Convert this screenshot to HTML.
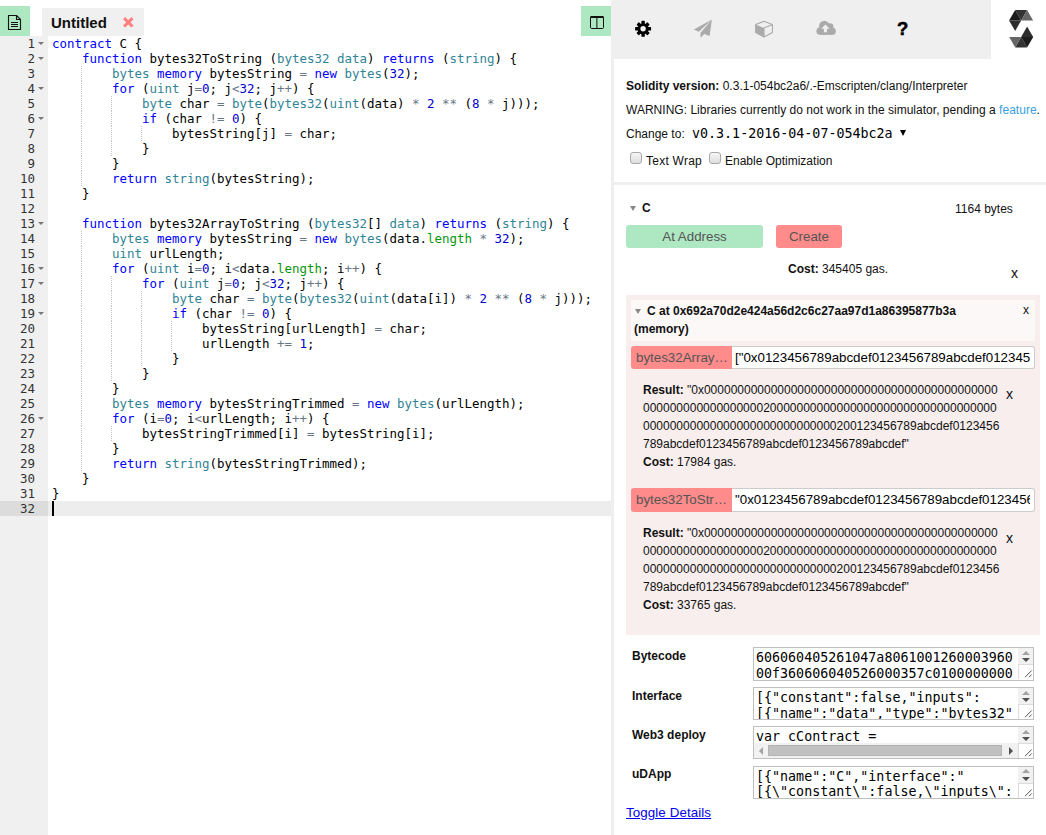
<!DOCTYPE html>
<html>
<head>
<meta charset="utf-8">
<title>Solidity realtime compiler and runtime</title>
<style>
*{box-sizing:border-box}
html,body{margin:0;padding:0;width:1046px;height:835px;overflow:hidden;background:#fff}
body{font-family:"Liberation Sans",Arial,sans-serif;font-size:12px;color:#111;position:relative}
.abs{position:absolute}
b{font-weight:bold}
/* ---------- left: editor ---------- */
#editor{position:absolute;left:0;top:0;width:612px;height:835px;background:#fff}
#newfile{position:absolute;left:0;top:6px;width:30px;height:30px;background:#aee8c3}
#toggleR{position:absolute;left:581px;top:6px;width:30px;height:30px;background:#aee8c3}
#tab{position:absolute;left:42px;top:8px;width:102px;height:28px;background:#f0f0f0;font-weight:bold;font-size:15px;color:#111;line-height:30px;padding-left:9px}
#tab svg{position:absolute;left:80px;top:7.8px}
#gutter{position:absolute;left:0;top:36px;width:48px;height:799px;background:#f0f0f0}
#code{position:absolute;left:0;top:36px;width:612px;height:799px;font-family:"DejaVu Sans Mono","Liberation Mono",monospace;font-size:12.46px;line-height:15px;color:#000}
.ln{position:relative;height:15px;white-space:pre}
.ln .n{position:absolute;left:0;top:0;width:35px;text-align:right;color:#333}
.ln .f{position:absolute;left:38px;top:6px;width:0;height:0;border-left:3px solid transparent;border-right:3px solid transparent;border-top:3.5px solid #777}
.ln .t{position:absolute;left:52px;top:0}
.ln.act{background:#ededed}
.ln.act .gl{position:absolute;left:0;top:0;width:48px;height:15px;background:#dcdcdc}
.k{color:#0000ff}.v{color:#318495}.o{color:#687687}.d{color:#0000cd}.c{color:#06960e}
.ig{position:absolute;top:0;width:1px;height:15px;background-image:linear-gradient(#c4c4c4 50%,transparent 50%);background-size:1px 2px}
#cursor{position:absolute;left:52px;top:501px;width:2px;height:15px;background:#000}
/* ---------- right panel ---------- */
#right{position:absolute;left:611px;top:0;width:435px;height:835px;background:#fff}
#dragbar{position:absolute;left:0;top:0;width:3px;height:835px;background:#efefef}
#menu{position:absolute;left:0;top:0;width:380px;height:59px;background:#efefef}
.sep{position:absolute;left:3px;width:432px;height:3px;background:#efefef}
.t12{position:absolute;white-space:nowrap;font-size:12px;line-height:18px;color:#111}
a.lnk{color:#3a9fe0;text-decoration:none}
.cb{position:absolute;width:12px;height:12px;border:1px solid #a9a9a9;border-radius:3px;background:linear-gradient(#f6f6f6,#dedede)}
.btn{position:absolute;height:23px;border-radius:3px;font-family:"Liberation Sans",Arial,sans-serif;font-size:13.33px;line-height:23px;text-align:center;white-space:nowrap;overflow:hidden}
.green{background:#aee8c3;color:#555}
.red{background:#ff8b8b;color:#555}
.fbtn{border-radius:3px 0 0 3px;color:#555;text-align:left;padding-left:5px}
.inp{position:absolute;height:23px;background:#fff;border:1px solid #ccc;border-left:0;border-radius:0 3px 3px 0;font-family:"Liberation Sans",Arial,sans-serif;font-size:13.33px;line-height:21px;padding:0 4px 0 3px;white-space:nowrap;overflow:hidden;color:#000}
.inp span{display:block;overflow:hidden}
#inst{position:absolute;left:15px;top:295px;width:414px;height:340px;background:#f7eeed}
#inst .title{position:absolute;left:5px;top:5px;width:404px;height:41px;background:#fbf8f7;font-weight:bold;line-height:18px;padding:2px 3px;white-space:nowrap}
.res{position:absolute;left:17px;width:358px;line-height:18px;font-size:12px;word-break:break-all;color:#111}
.x{position:absolute;font-size:14px;line-height:14px;color:#111}
.row b{position:absolute;left:21px;font-size:12px}
.ta{position:absolute;left:142px;width:281px;height:33px;border:1px solid #c0c0c0;background:#fff;font-family:"DejaVu Sans Mono","Liberation Mono",monospace;font-size:13.33px;line-height:15.5px;padding:2px 0 0 2px;white-space:pre;overflow:hidden;color:#000}
.ta .sb{position:absolute;right:0;top:0;width:15px;height:16px;background:#f1f1f1}
.ta .sb:before{content:"";position:absolute;left:3.5px;top:2.8px;border-left:4px solid transparent;border-right:4px solid transparent;border-bottom:4.2px solid #a3a3a3}
.ta .sb:after{content:"";position:absolute;left:3.5px;top:10px;border-left:4px solid transparent;border-right:4px solid transparent;border-top:4.2px solid #505050}
.ta .rz{position:absolute;right:0;top:16px;width:15px;height:15px;background:#fff;border-left:1px solid #dcdcdc;border-top:1px solid #dcdcdc}
.ta .rz svg{position:absolute;left:-1px;top:-1px}
.ta .hs{position:absolute;left:0;top:16px;width:264px;height:15px;background:#f1f1f1}
.ta .hs:before{content:"";position:absolute;left:4.8px;top:3.5px;border-top:4px solid transparent;border-bottom:4px solid transparent;border-right:4.2px solid #a3a3a3}
.ta .hs:after{content:"";position:absolute;left:255px;top:3.5px;border-top:4px solid transparent;border-bottom:4px solid transparent;border-left:4.2px solid #505050}
.ta .hs i{position:absolute;left:14px;top:2px;width:234px;height:11px;background:#c1c1c1;border:1px solid #b4b4b4}
</style>
</head>
<body>
<div id="editor">
  <div id="gutter"></div>
  <div id="newfile"><svg width="30" height="30" viewBox="0 0 30 30" style="position:absolute;left:0;top:0"><path d="M8.5 9.5 H16.5 L20.5 13.5 V23.5 H8.5 Z M16.5 9.5 V13.5 H20.5" fill="none" stroke="#111" stroke-width="1.1" stroke-linejoin="round"/><path d="M11 16.5 H18 M11 18.5 H18 M11 20.5 H18" stroke="#111" stroke-width="1" fill="none"/></svg></div>
  <div id="tab">Untitled<svg width="12.6" height="12.6" viewBox="0 0 12 12"><path d="M2 2 L10 10 M10 2 L2 10" stroke="#ff8080" stroke-width="3" fill="none"/></svg></div>
  <div id="toggleR"><svg width="30" height="30" viewBox="0 0 30 30" style="position:absolute;left:0;top:0"><rect x="9.5" y="10.5" width="13" height="12" rx="1.2" fill="none" stroke="#111" stroke-width="1"/><rect x="9.5" y="10" width="13" height="2" fill="#111"/><path d="M15.9 11 V22.5" stroke="#111" stroke-width="1"/></svg></div>
  <div id="code">
<div class="ln"><span class="n">1</span><span class="f"></span><span class="t"><span class="k">contract</span> C {</span></div>
<div class="ln"><span class="n">2</span><span class="f"></span><span class="t">    <span class="k">function</span> bytes32ToString (<span class="v">bytes32</span> <span class="v">data</span>) <span class="k">returns</span> (<span class="v">string</span>) {</span></div>
<div class="ln"><span class="n">3</span><i class="ig" style="left:81px"></i><span class="t">        <span class="v">bytes</span> <span class="k">memory</span> bytesString <span class="o">=</span> <span class="k">new</span> <span class="v">bytes</span>(<span class="d">32</span>);</span></div>
<div class="ln"><span class="n">4</span><span class="f"></span><i class="ig" style="left:81px"></i><span class="t">        <span class="k">for</span> (<span class="v">uint</span> j<span class="o">=</span><span class="d">0</span>; j<span class="o">&lt;</span><span class="d">32</span>; j<span class="o">++</span>) {</span></div>
<div class="ln"><span class="n">5</span><i class="ig" style="left:81px"></i><i class="ig" style="left:111px"></i><span class="t">            <span class="v">byte</span> char <span class="o">=</span> <span class="v">byte</span>(<span class="v">bytes32</span>(<span class="v">uint</span>(data) <span class="o">*</span> <span class="d">2</span> <span class="o">**</span> (<span class="d">8</span> <span class="o">*</span> j)));</span></div>
<div class="ln"><span class="n">6</span><span class="f"></span><i class="ig" style="left:81px"></i><i class="ig" style="left:111px"></i><span class="t">            <span class="k">if</span> (char <span class="o">!=</span> <span class="d">0</span>) {</span></div>
<div class="ln"><span class="n">7</span><i class="ig" style="left:81px"></i><i class="ig" style="left:111px"></i><i class="ig" style="left:141px"></i><span class="t">                bytesString[j] <span class="o">=</span> char;</span></div>
<div class="ln"><span class="n">8</span><i class="ig" style="left:81px"></i><i class="ig" style="left:111px"></i><span class="t">            }</span></div>
<div class="ln"><span class="n">9</span><i class="ig" style="left:81px"></i><span class="t">        }</span></div>
<div class="ln"><span class="n">10</span><i class="ig" style="left:81px"></i><span class="t">        <span class="k">return</span> <span class="v">string</span>(bytesString);</span></div>
<div class="ln"><span class="n">11</span><span class="t">    }</span></div>
<div class="ln"><span class="n">12</span><span class="t"></span></div>
<div class="ln"><span class="n">13</span><span class="f"></span><span class="t">    <span class="k">function</span> bytes32ArrayToString (<span class="v">bytes32</span>[] <span class="v">data</span>) <span class="k">returns</span> (<span class="v">string</span>) {</span></div>
<div class="ln"><span class="n">14</span><i class="ig" style="left:81px"></i><span class="t">        <span class="v">bytes</span> <span class="k">memory</span> bytesString <span class="o">=</span> <span class="k">new</span> <span class="v">bytes</span>(data.<span class="c">length</span> <span class="o">*</span> <span class="d">32</span>);</span></div>
<div class="ln"><span class="n">15</span><i class="ig" style="left:81px"></i><span class="t">        <span class="v">uint</span> urlLength;</span></div>
<div class="ln"><span class="n">16</span><span class="f"></span><i class="ig" style="left:81px"></i><span class="t">        <span class="k">for</span> (<span class="v">uint</span> i<span class="o">=</span><span class="d">0</span>; i<span class="o">&lt;</span>data.<span class="c">length</span>; i<span class="o">++</span>) {</span></div>
<div class="ln"><span class="n">17</span><span class="f"></span><i class="ig" style="left:81px"></i><i class="ig" style="left:111px"></i><span class="t">            <span class="k">for</span> (<span class="v">uint</span> j<span class="o">=</span><span class="d">0</span>; j<span class="o">&lt;</span><span class="d">32</span>; j<span class="o">++</span>) {</span></div>
<div class="ln"><span class="n">18</span><i class="ig" style="left:81px"></i><i class="ig" style="left:111px"></i><i class="ig" style="left:141px"></i><span class="t">                <span class="v">byte</span> char <span class="o">=</span> <span class="v">byte</span>(<span class="v">bytes32</span>(<span class="v">uint</span>(data[i]) <span class="o">*</span> <span class="d">2</span> <span class="o">**</span> (<span class="d">8</span> <span class="o">*</span> j)));</span></div>
<div class="ln"><span class="n">19</span><span class="f"></span><i class="ig" style="left:81px"></i><i class="ig" style="left:111px"></i><i class="ig" style="left:141px"></i><span class="t">                <span class="k">if</span> (char <span class="o">!=</span> <span class="d">0</span>) {</span></div>
<div class="ln"><span class="n">20</span><i class="ig" style="left:81px"></i><i class="ig" style="left:111px"></i><i class="ig" style="left:141px"></i><i class="ig" style="left:171px"></i><span class="t">                    bytesString[urlLength] <span class="o">=</span> char;</span></div>
<div class="ln"><span class="n">21</span><i class="ig" style="left:81px"></i><i class="ig" style="left:111px"></i><i class="ig" style="left:141px"></i><i class="ig" style="left:171px"></i><span class="t">                    urlLength <span class="o">+=</span> <span class="d">1</span>;</span></div>
<div class="ln"><span class="n">22</span><i class="ig" style="left:81px"></i><i class="ig" style="left:111px"></i><i class="ig" style="left:141px"></i><span class="t">                }</span></div>
<div class="ln"><span class="n">23</span><i class="ig" style="left:81px"></i><i class="ig" style="left:111px"></i><span class="t">            }</span></div>
<div class="ln"><span class="n">24</span><i class="ig" style="left:81px"></i><span class="t">        }</span></div>
<div class="ln"><span class="n">25</span><i class="ig" style="left:81px"></i><span class="t">        <span class="v">bytes</span> <span class="k">memory</span> bytesStringTrimmed <span class="o">=</span> <span class="k">new</span> <span class="v">bytes</span>(urlLength);</span></div>
<div class="ln"><span class="n">26</span><span class="f"></span><i class="ig" style="left:81px"></i><span class="t">        <span class="k">for</span> (i<span class="o">=</span><span class="d">0</span>; i<span class="o">&lt;</span>urlLength; i<span class="o">++</span>) {</span></div>
<div class="ln"><span class="n">27</span><i class="ig" style="left:81px"></i><i class="ig" style="left:111px"></i><span class="t">            bytesStringTrimmed[i] <span class="o">=</span> bytesString[i];</span></div>
<div class="ln"><span class="n">28</span><i class="ig" style="left:81px"></i><span class="t">        }</span></div>
<div class="ln"><span class="n">29</span><i class="ig" style="left:81px"></i><span class="t">        <span class="k">return</span> <span class="v">string</span>(bytesStringTrimmed);</span></div>
<div class="ln"><span class="n">30</span><span class="t">    }</span></div>
<div class="ln"><span class="n">31</span><span class="t">}</span></div>
<div class="ln act"><span class="gl"></span><span class="n">32</span><span class="t"></span></div>
  </div>
  <div id="cursor"></div>
</div>
<div id="right">
  <div id="dragbar"></div>
  <div id="menu">
    <svg width="380" height="59" viewBox="611 0 380 59" style="position:absolute;left:0;top:0">
      <!-- gear -->
      <g transform="translate(643.1 28.8)" fill="#000">
        <circle r="5.6"/>
        <g id="teeth"><rect x="-1.7" y="-8" width="3.4" height="16" rx=".6"/><rect x="-8" y="-1.7" width="16" height="3.4" rx=".6"/></g>
        <g transform="rotate(45)"><rect x="-1.7" y="-7.7" width="3.4" height="15.4" rx=".6"/><rect x="-7.7" y="-1.7" width="15.4" height="3.4" rx=".6"/></g>
        <circle r="2.7" fill="#efefef"/>
      </g>
      <!-- paper plane -->
      <path d="M693.9 29.45 L711.9 19.4 L698.8 31.8 Z M700.4 33 L711.9 19.4 L709.6 35.9 L704.2 33.9 L700.6 37.7 Z" fill="#aaa"/>
      <!-- cube -->
      <path d="M764 21.3 L772.4 24.6 V32.4 L764 36.9 L755.7 32.4 V24.6 Z M764 28 L772.4 24.6 M764 28 V36.9" fill="none" stroke="#aaa" stroke-width="1.1" stroke-linejoin="round"/>
      <path d="M755.7 24.6 L764 28 V36.9 L755.7 32.4 Z" fill="#aaa"/>
      <!-- cloud upload -->
      <g fill="#aaa"><circle cx="820.25" cy="31" r="3.85"/><circle cx="824.3" cy="25.9" r="5.25"/><circle cx="830.2" cy="26.4" r="3.2"/><circle cx="832.15" cy="31.2" r="3.65"/><rect x="820.2" y="27" width="12" height="7.85"/></g>
      <path d="M825.4 24.4 L829.7 28.7 H826.9 V32.3 H823.9 V28.7 H821.3 Z" fill="#efefef"/>
    </svg>
    <div class="abs" style="left:286px;top:18px;font-size:18.5px;font-weight:bold;line-height:22px;color:#000;-webkit-text-stroke:.5px #000">?</div>
  </div>
  <svg width="30" height="42" viewBox="1007 8 30 42" style="position:absolute;left:396px;top:8px">
    <polygon points="1015.2,10 1027.1,10 1021.15,20.5" fill="#333"/>
    <polygon points="1027.1,10 1033.1,20.5 1021.15,20.5" fill="#666"/>
    <polygon points="1015.2,10 1021.15,20.5 1009.05,20.5" fill="#1c1c1c"/>
    <polygon points="1009.05,20.5 1021.15,20.5 1015.2,30.95" fill="#2e2e2e"/>
    <polygon points="1027.1,47.4 1015.2,47.4 1021.15,36.9" fill="#333"/>
    <polygon points="1015.2,47.4 1009.2,36.9 1021.15,36.9" fill="#666"/>
    <polygon points="1027.1,47.4 1021.15,36.9 1033.2,36.9" fill="#1c1c1c"/>
    <polygon points="1033.2,36.9 1021.15,36.9 1027.1,26.45" fill="#2e2e2e"/>
  </svg>

  <div class="t12" style="left:15px;top:77px"><b>Solidity version:</b> 0.3.1-054bc2a6/.-Emscripten/clang/Interpreter</div>
  <div class="t12" style="left:15px;top:101px;letter-spacing:.02px">WARNING: Libraries currently do not work in the simulator, pending a <a class="lnk">feature</a>.</div>
  <div class="t12" style="left:15px;top:125px">Change to:</div>
  <div class="abs" style="left:81px;top:125px;font-family:'DejaVu Sans Mono','Liberation Mono',monospace;font-size:13.33px;line-height:18px;white-space:nowrap;color:#000">v0.3.1-2016-04-07-054bc2a </div>
  <div class="abs" style="left:288.5px;top:129.5px;width:0;height:0;border-left:3.5px solid transparent;border-right:3.5px solid transparent;border-top:6px solid #000"></div>
  <div class="cb" style="left:19px;top:152px"></div>
  <div class="t12" style="left:35px;top:152px;letter-spacing:.25px">Text Wrap</div>
  <div class="cb" style="left:98px;top:152px"></div>
  <div class="t12" style="left:114px;top:152px">Enable Optimization</div>

  <div class="sep" style="top:182px"></div>

  <div class="abs" style="left:19px;top:206px;width:0;height:0;border-left:3px solid transparent;border-right:3px solid transparent;border-top:5px solid #888"></div>
  <div class="t12" style="left:31px;top:199px"><b>C</b></div>
  <div class="t12" style="left:344px;top:200px">1164 bytes</div>
  <div class="btn green" style="left:15px;top:225px;width:137px">At Address</div>
  <div class="btn red" style="left:165px;top:225px;width:66px">Create</div>
  <div class="t12" style="left:177px;top:260px"><b>Cost:</b> 345405 gas.</div>
  <div class="x" style="left:400px;top:266px">x</div>

  <div id="inst">
    <div class="title"><span style="display:inline-block;width:0;height:0;border-left:3px solid transparent;border-right:3px solid transparent;border-top:5px solid #888;margin:0 6px 1px 1px"></span>C at 0x692a70d2e424a56d2c6c27aa97d1a86395877b3a<br>(memory)</div>
    <div class="x" style="left:397px;top:7.5px;font-size:12px">x</div>

    <div class="btn red fbtn" style="left:5px;top:51px;width:101px">bytes32Array&hellip;</div>
    <div class="inp" style="left:106px;top:51px;width:303px"><span>["0x0123456789abcdef0123456789abcdef0123456789abcdef0123456789abcdef"]</span></div>
    <div class="res" style="top:86px"><b>Result:</b> "0x000000000000000000000000000000000000000000000000000000000000002000000000000000000000000000000000000000000000000000000000000000200123456789abcdef0123456789abcdef0123456789abcdef0123456789abcdef"<br><b>Cost:</b> 17984 gas.</div>
    <div class="x" style="left:380px;top:92px">x</div>

    <div class="btn red fbtn" style="left:5px;top:193px;width:101px;height:24px;line-height:24px">bytes32ToStr&hellip;</div>
    <div class="inp" style="left:106px;top:193px;width:303px;height:24px;line-height:22px"><span>"0x0123456789abcdef0123456789abcdef0123456789abcdef0123456789abcdef"</span></div>
    <div class="res" style="top:229px"><b>Result:</b> "0x000000000000000000000000000000000000000000000000000000000000002000000000000000000000000000000000000000000000000000000000000000200123456789abcdef0123456789abcdef0123456789abcdef0123456789abcdef"<br><b>Cost:</b> 33765 gas.</div>
    <div class="x" style="left:380px;top:236px">x</div>
  </div>

  <div class="row">
    <b style="top:649px">Bytecode</b>
    <div class="ta" style="top:647px;height:34px">606060405261047a8061001260003960
00f360606040526000357c0100000000<span class="sb"></span><span class="rz"><svg width="15" height="15" viewBox="0 0 15 15"><path d="M7 13.2 L13.7 6.5 M11 13.2 L13.7 10.5" stroke="#555" stroke-width="1" fill="none"/></svg></span></div>
    <b style="top:689px">Interface</b>
    <div class="ta" style="top:687px">[{"constant":false,"inputs":
[{"name":"data","type":"bytes32"<span class="sb"></span><span class="rz"><svg width="15" height="15" viewBox="0 0 15 15"><path d="M7 13.2 L13.7 6.5 M11 13.2 L13.7 10.5" stroke="#555" stroke-width="1" fill="none"/></svg></span></div>
    <b style="top:728px">Web3 deploy</b>
    <div class="ta" style="top:726px">var cContract =
<span class="sb"></span><span class="rz"><svg width="15" height="15" viewBox="0 0 15 15"><path d="M7 13.2 L13.7 6.5 M11 13.2 L13.7 10.5" stroke="#555" stroke-width="1" fill="none"/></svg></span><span class="hs"><i></i></span></div>
    <b style="top:767px">uDApp</b>
    <div class="ta" style="top:765.5px">[{"name":"C","interface":"
[{\"constant\":false,\"inputs\":<span class="sb"></span><span class="rz"><svg width="15" height="15" viewBox="0 0 15 15"><path d="M7 13.2 L13.7 6.5 M11 13.2 L13.7 10.5" stroke="#555" stroke-width="1" fill="none"/></svg></span></div>
  </div>
  <div class="abs" style="left:15px;top:805px;letter-spacing:.1px;font-size:13.33px;color:#0000ee;text-decoration:underline;white-space:nowrap">Toggle Details</div>
</div>
</body>
</html>
